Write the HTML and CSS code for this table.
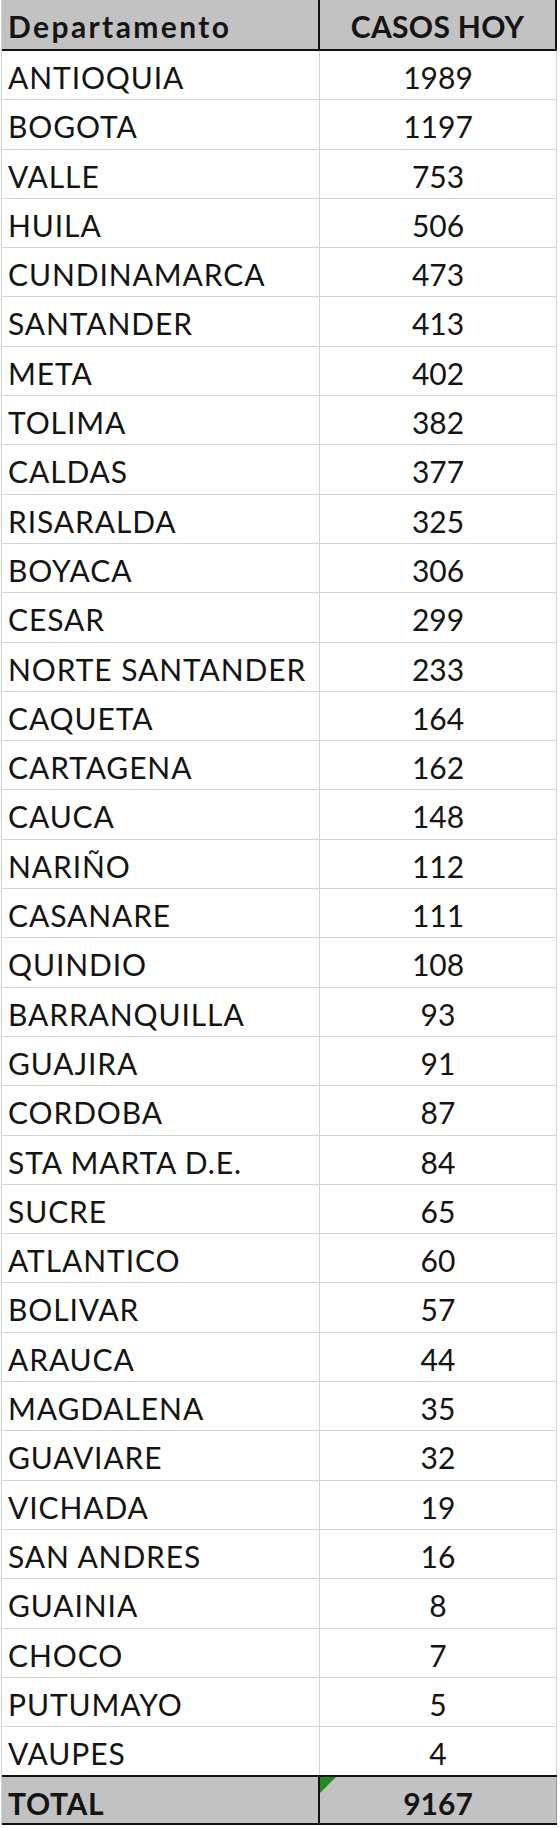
FILE: index.html
```html
<!DOCTYPE html>
<html lang="es">
<head>
<meta charset="utf-8">
<title>Casos hoy por departamento</title>
<link rel="stylesheet" href="styles.css">
</head>
<body>
<div class="sheet">
  <div class="row head">
    <div class="cell name">Departamento</div>
    <div class="cell num">CASOS HOY</div>
  </div>
  <div class="row"><div class="cell name">ANTIOQUIA</div><div class="cell num">1989</div></div>
  <div class="row"><div class="cell name">BOGOTA</div><div class="cell num">1197</div></div>
  <div class="row"><div class="cell name">VALLE</div><div class="cell num">753</div></div>
  <div class="row"><div class="cell name">HUILA</div><div class="cell num">506</div></div>
  <div class="row"><div class="cell name">CUNDINAMARCA</div><div class="cell num">473</div></div>
  <div class="row"><div class="cell name">SANTANDER</div><div class="cell num">413</div></div>
  <div class="row"><div class="cell name">META</div><div class="cell num">402</div></div>
  <div class="row"><div class="cell name">TOLIMA</div><div class="cell num">382</div></div>
  <div class="row"><div class="cell name">CALDAS</div><div class="cell num">377</div></div>
  <div class="row"><div class="cell name">RISARALDA</div><div class="cell num">325</div></div>
  <div class="row"><div class="cell name">BOYACA</div><div class="cell num">306</div></div>
  <div class="row"><div class="cell name">CESAR</div><div class="cell num">299</div></div>
  <div class="row"><div class="cell name">NORTE SANTANDER</div><div class="cell num">233</div></div>
  <div class="row"><div class="cell name">CAQUETA</div><div class="cell num">164</div></div>
  <div class="row"><div class="cell name">CARTAGENA</div><div class="cell num">162</div></div>
  <div class="row"><div class="cell name">CAUCA</div><div class="cell num">148</div></div>
  <div class="row"><div class="cell name">NARIÑO</div><div class="cell num">112</div></div>
  <div class="row"><div class="cell name">CASANARE</div><div class="cell num">111</div></div>
  <div class="row"><div class="cell name">QUINDIO</div><div class="cell num">108</div></div>
  <div class="row"><div class="cell name">BARRANQUILLA</div><div class="cell num">93</div></div>
  <div class="row"><div class="cell name">GUAJIRA</div><div class="cell num">91</div></div>
  <div class="row"><div class="cell name">CORDOBA</div><div class="cell num">87</div></div>
  <div class="row"><div class="cell name">STA MARTA D.E.</div><div class="cell num">84</div></div>
  <div class="row"><div class="cell name">SUCRE</div><div class="cell num">65</div></div>
  <div class="row"><div class="cell name">ATLANTICO</div><div class="cell num">60</div></div>
  <div class="row"><div class="cell name">BOLIVAR</div><div class="cell num">57</div></div>
  <div class="row"><div class="cell name">ARAUCA</div><div class="cell num">44</div></div>
  <div class="row"><div class="cell name">MAGDALENA</div><div class="cell num">35</div></div>
  <div class="row"><div class="cell name">GUAVIARE</div><div class="cell num">32</div></div>
  <div class="row"><div class="cell name">VICHADA</div><div class="cell num">19</div></div>
  <div class="row"><div class="cell name">SAN ANDRES</div><div class="cell num">16</div></div>
  <div class="row"><div class="cell name">GUAINIA</div><div class="cell num">8</div></div>
  <div class="row"><div class="cell name">CHOCO</div><div class="cell num">7</div></div>
  <div class="row"><div class="cell name">PUTUMAYO</div><div class="cell num">5</div></div>
  <div class="row"><div class="cell name">VAUPES</div><div class="cell num">4</div></div>
  <div class="row total">
    <div class="cell name">TOTAL</div>
    <div class="cell num flagged">9167</div>
  </div>
</div>
</body>
</html>
```
FILE: styles.css
```css
html, body {
  margin: 0;
  padding: 0;
  background: #ffffff;
}

.sheet {
  width: 555px;
  margin-left: 1px;
  display: flex;
  flex-direction: column;
  font-family: Lato, "Open Sans", "Liberation Sans", sans-serif;
  font-size: 30px;
  color: #141414;
  border-left: 1px solid #d2d2d2;
}

.row {
  display: flex;
  box-sizing: border-box;
  height: 49.3px;
  border-bottom: 1px solid #d4d4d4;
}

.cell {
  box-sizing: border-box;
  line-height: 48px;
  padding-top: 2px;
  white-space: nowrap;
}

.name {
  width: 318px;
  padding-left: 6px;
  border-right: 1px solid #d4d4d4;
  letter-spacing: 0.9px;
}

.num {
  flex: 1;
  text-align: center;
  border-right: 1px solid #d4d4d4;
}

.head {
  height: 51px;
  background: #c2c2c2;
  border-bottom: 2px solid #111111;
  font-weight: 700;
}

.head .name {
  border-right: 2px solid #111111;
  letter-spacing: 2.4px;
}

.head .num {
  border-right: 2px solid #111111;
  letter-spacing: 0.3px;
}

.total {
  height: 50px;
  background: #c2c2c2;
  border-top: 2px solid #111111;
  border-bottom: 2px solid #111111;
  margin-top: -1px;
  font-weight: 700;
}

.total .name {
  border-right: 2px solid #111111;
  letter-spacing: 0.6px;
}

.total .num {
  border-right: 1px solid #9a9a9a;
}

.flagged {
  position: relative;
}

.flagged::before {
  content: "";
  position: absolute;
  left: 0;
  top: 0;
  border-top: 16px solid #1f8a1f;
  border-right: 16px solid transparent;
}
```
